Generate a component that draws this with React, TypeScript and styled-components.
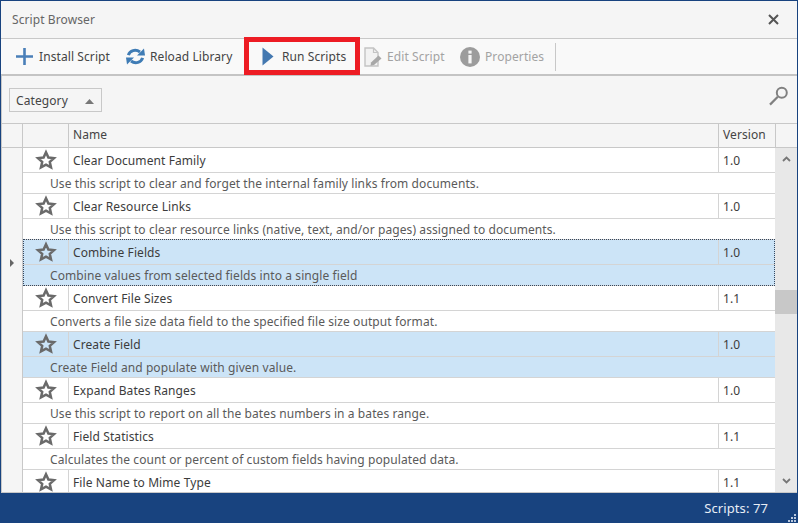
import styled, { createGlobalStyle } from 'styled-components'

const scripts = [
  { name: 'Clear Document Family', version: '1.0', info: 'Use this script to clear and forget the internal family links from documents.' },
  { name: 'Clear Resource Links', version: '1.0', info: 'Use this script to clear resource links (native, text, and/or pages) assigned to documents.' },
  { name: 'Combine Fields', version: '1.0', info: 'Combine values from selected fields into a single field', selected: true, focused: true },
  { name: 'Convert File Sizes', version: '1.1', info: 'Converts a file size data field to the specified file size output format.' },
  { name: 'Create Field', version: '1.0', info: 'Create Field and populate with given value.', selected: true },
  { name: 'Expand Bates Ranges', version: '1.0', info: 'Use this script to report on all the bates numbers in a bates range.' },
  { name: 'Field Statistics', version: '1.1', info: 'Calculates the count or percent of custom fields having populated data.' },
  { name: 'File Name to Mime Type', version: '1.1' },
]

function Star() {
  return (
    <svg width="22" height="21" viewBox="0 0 22 21">
      <path
        d="M11 3.2 L13.4 8.5 L19 9.1 L14.8 12.9 L16 18.4 L11 15.6 L6 18.4 L7.2 12.9 L3 9.1 L8.6 8.5 Z"
        fill="none"
        stroke="#6a6a6a"
        strokeWidth="2.5"
      />
    </svg>
  )
}

function App() {
  return (
    <Window>
      <GlobalStyle />
      <TitleBar>
        <Title>Script Browser</Title>
        <svg width="11" height="11" viewBox="0 0 11 11">
          <path d="M1 1 L10 10 M10 1 L1 10" stroke="#555" strokeWidth="2" />
        </svg>
      </TitleBar>
      <Toolbar>
        <ToolButton $pad="14px" $gap="5px" $width="118px">
          <svg width="19" height="19" viewBox="0 0 19 19">
            <path d="M9.5 1 V18 M1 9.5 H18" stroke="#4a7fb8" strokeWidth="2.6" />
          </svg>
          Install Script
        </ToolButton>
        <ToolButton $pad="6px" $gap="4px" $width="125px">
          <svg width="21" height="19" viewBox="0 0 21 19">
            <path d="M3.4 8.2 C4.8 3.4 10.6 1.8 15 5" fill="none" stroke="#3f7cb5" strokeWidth="3" />
            <path d="M12 8.6 L20 8.6 L19 1.6 Z" fill="#3f7cb5" />
            <path d="M17.6 10.8 C16.2 15.6 10.4 17.2 6 14" fill="none" stroke="#3f7cb5" strokeWidth="3" />
            <path d="M9 10.4 L1 10.4 L2 17.4 Z" fill="#3f7cb5" />
          </svg>
          Reload Library
        </ToolButton>
        <HighlightButton>
          <svg width="12" height="19" viewBox="0 0 12 19">
            <path d="M0.5 0.5 L11.5 9.5 L0.5 18.5 Z" fill="#4478b0" />
          </svg>
          Run Scripts
        </HighlightButton>
        <ToolButton $pad="4px" $gap="5px" $width="96px" $disabled>
          <svg width="18" height="20" viewBox="0 0 18 20">
            <path d="M1 1 H9.5 L14 5.5 V19 H1 Z" fill="#f2f2f2" stroke="#c4c4c4" strokeWidth="1.4" />
            <path d="M9.5 1 V5.5 H14" fill="none" stroke="#c4c4c4" strokeWidth="1.2" />
            <path d="M7 15.5 L14.5 8.5 L17.5 11.5 L10 18 L6.5 18.8 Z" fill="#a8a8a8" />
          </svg>
          Edit Script
        </ToolButton>
        <ToolButton $pad="4px" $gap="5px" $width="95px" $disabled>
          <svg width="20" height="20" viewBox="0 0 20 20">
            <circle cx="10" cy="10" r="10" fill="#9c9c9c" />
            <rect x="8.4" y="3.6" width="3.2" height="3" fill="#f5f5f5" />
            <rect x="8.4" y="8" width="3.2" height="8.4" fill="#f5f5f5" />
          </svg>
          Properties
        </ToolButton>
        <ToolSeparator />
      </Toolbar>
      <Panel>
        <FilterBar>
          <CategoryButton>
            <span>Category</span>
            <svg width="9" height="5" viewBox="0 0 9 5">
              <path d="M4.5 0 L9 5 H0 Z" fill="#777" />
            </svg>
          </CategoryButton>
          <SearchIcon width="20" height="20" viewBox="0 0 20 20">
            <circle cx="12.8" cy="6.8" r="5" fill="none" stroke="#808080" strokeWidth="2" />
            <path d="M8.8 10.8 L1 18.6" stroke="#808080" strokeWidth="2.2" />
          </SearchIcon>
        </FilterBar>
        <HeaderRow>
          <HeaderCell />
          <HeaderCell />
          <HeaderCell>Name</HeaderCell>
          <HeaderCell>Version</HeaderCell>
          <HeaderCell $last />
        </HeaderRow>
        <Body>
          <List>
            {scripts.map((s) => (
              <Record key={s.name} $selected={s.selected}>
                <Indicator>{s.focused && <Arrow />}</Indicator>
                <StarCell>
                  <Star />
                </StarCell>
                <NameCell>{s.name}</NameCell>
                <VersionCell>{s.version}</VersionCell>
                {s.info && <InfoCell>{s.info}</InfoCell>}
                {s.focused && <FocusBox />}
              </Record>
            ))}
          </List>
          <Scrollbar>
            <ScrollArrow>
              <svg width="9" height="6" viewBox="0 0 9 6">
                <path d="M1 5 L4.5 1.5 L8 5" fill="none" stroke="#777" strokeWidth="1.8" />
              </svg>
            </ScrollArrow>
            <Thumb />
            <ScrollArrow>
              <svg width="9" height="6" viewBox="0 0 9 6">
                <path d="M1 1 L4.5 4.5 L8 1" fill="none" stroke="#777" strokeWidth="1.8" />
              </svg>
            </ScrollArrow>
          </Scrollbar>
        </Body>
      </Panel>
      <StatusBar>
        Scripts: 77
        <Grip>
          <svg width="9" height="9" viewBox="0 0 9 9">
            <path d="M7 1h2v2H7z M4 4h2v2H4z M7 4h2v2H7z M1 7h2v2H1z M4 7h2v2H4z M7 7h2v2H7z" fill="#b9c8de" />
          </svg>
        </Grip>
      </StatusBar>
    </Window>
  )
}

export default App

const GlobalStyle = createGlobalStyle`
  * {
    box-sizing: border-box;
  }
  html, body {
    margin: 0;
    padding: 0;
  }
  body {
    font-family: 'Noto Sans', 'Open Sans', Arial, sans-serif;
    font-size: 12px;
    letter-spacing: 0.09px;
    color: #444;
  }
`

const Window = styled.div`
  display: flex;
  flex-direction: column;
  width: 798px;
  height: 523px;
  overflow: hidden;
  background: #f5f5f5;
  border: 1px solid #18437f;
  border-bottom: 0;
`

const TitleBar = styled.div`
  display: flex;
  flex: none;
  align-items: center;
  justify-content: space-between;
  height: 38px;
  padding: 0 18px 0 11px;
  border-bottom: 1px solid #c8c8c8;
`

const Title = styled.div`
  color: #666;
`

const Toolbar = styled.div`
  display: flex;
  flex: none;
  align-items: center;
  height: 37px;
  background: #f9f9f9;
  border-bottom: 2px solid #c4c4c4;
`

const ToolButton = styled.div<{ $pad: string; $gap: string; $width: string; $disabled?: boolean }>`
  display: flex;
  flex: none;
  align-items: center;
  gap: ${(p) => p.$gap};
  width: ${(p) => p.$width};
  padding-left: ${(p) => p.$pad};
  color: ${(p) => (p.$disabled ? '#a3a3a3' : '#444')};
  white-space: nowrap;
`

const HighlightButton = styled.div`
  display: flex;
  flex: none;
  align-items: center;
  gap: 8px;
  width: 116px;
  height: 38px;
  margin: -1px 0 0 0;
  padding-left: 13px;
  border: 5px solid #ed1c24;
  white-space: nowrap;
`

const ToolSeparator = styled.div`
  width: 1px;
  height: 28px;
  margin-left: 4px;
  background: #c8c8c8;
`

const Panel = styled.div`
  display: flex;
  flex: 1;
  flex-direction: column;
  min-height: 0;
  border-left: 1px solid #c8c8c8;
`

const FilterBar = styled.div`
  display: flex;
  flex: none;
  align-items: center;
  justify-content: space-between;
  height: 48px;
  padding: 0 8px 0 7px;
  border-bottom: 1px solid #c8c8c8;
`

const SearchIcon = styled.svg`
  margin-top: -7px;
`

const CategoryButton = styled.div`
  display: flex;
  align-items: center;
  gap: 17px;
  width: 93px;
  height: 24px;
  padding-left: 6px;
  border: 1px solid #c8c8c8;
  span {
    padding-top: 1px;
  }
  svg {
    margin-top: 3px;
  }
`

const columns = '21px 46px 650px 57px'

const HeaderRow = styled.div`
  display: grid;
  flex: none;
  grid-template-columns: ${columns} 1fr;
  height: 24px;
  border-bottom: 1px solid #c8c8c8;
`

const HeaderCell = styled.div<{ $last?: boolean }>`
  display: flex;
  align-items: center;
  padding: 0 0 2px 4px;
  border-right: ${(p) => (p.$last ? '0' : '1px solid #c8c8c8')};
`

const Body = styled.div`
  display: flex;
  flex: 1;
  min-height: 0;
  border-bottom: 1px solid #c8c8c8;
`

const List = styled.div`
  flex: 1;
  min-width: 0;
  overflow: hidden;
  background: #fff;
`

const Record = styled.div<{ $selected?: boolean }>`
  position: relative;
  display: grid;
  grid-template-columns: ${columns};
  grid-template-rows: 25px 21px;
  background: ${(p) => (p.$selected ? '#cce4f7' : '#fff')};
`

const Indicator = styled.div`
  grid-row: 1 / span 2;
  display: flex;
  align-items: center;
  justify-content: center;
  background: #f5f5f5;
  border-right: 1px solid #c8c8c8;
`

const Arrow = styled.span`
  width: 0;
  height: 0;
  border-top: 4px solid transparent;
  border-bottom: 4px solid transparent;
  border-left: 4px solid #666;
`

const StarCell = styled.div`
  display: flex;
  align-items: center;
  justify-content: center;
  padding-bottom: 2px;
  border-right: 1px solid #d4d4d4;
  border-bottom: 1px solid #d4d4d4;
`

const NameCell = styled.div`
  display: flex;
  align-items: center;
  padding-left: 4px;
  color: #3c3c3c;
  border-right: 1px solid #d4d4d4;
  border-bottom: 1px solid #d4d4d4;
`

const VersionCell = styled.div`
  display: flex;
  align-items: center;
  padding-left: 4px;
  color: #3c3c3c;
  border-bottom: 1px solid #d4d4d4;
`

const InfoCell = styled.div`
  grid-column: 2 / span 3;
  display: flex;
  align-items: center;
  padding-left: 27px;
  color: #5a5a5a;
  white-space: nowrap;
  border-bottom: 1px solid #d4d4d4;
`

const FocusBox = styled.div`
  position: absolute;
  top: -1px;
  right: 0;
  bottom: 0;
  left: 21px;
  border: 1px dotted #33475f;
  pointer-events: none;
`

const Scrollbar = styled.div`
  display: flex;
  flex: none;
  flex-direction: column;
  width: 22px;
  background: #e8e8e8;
`

const ScrollArrow = styled.div`
  display: flex;
  align-items: center;
  justify-content: center;
  height: 22px;
  &:last-child {
    margin-top: auto;
  }
`

const Thumb = styled.div`
  height: 24px;
  margin-top: 120px;
  background: #c8c8c8;
`

const StatusBar = styled.div`
  position: relative;
  display: flex;
  flex: none;
  align-items: center;
  justify-content: flex-end;
  height: 30px;
  padding-right: 29px;
  font-size: 13px;
  color: #e8eef6;
  background: #18437f;
`

const Grip = styled.div`
  position: absolute;
  right: 1px;
  bottom: 1px;
  display: flex;
`
